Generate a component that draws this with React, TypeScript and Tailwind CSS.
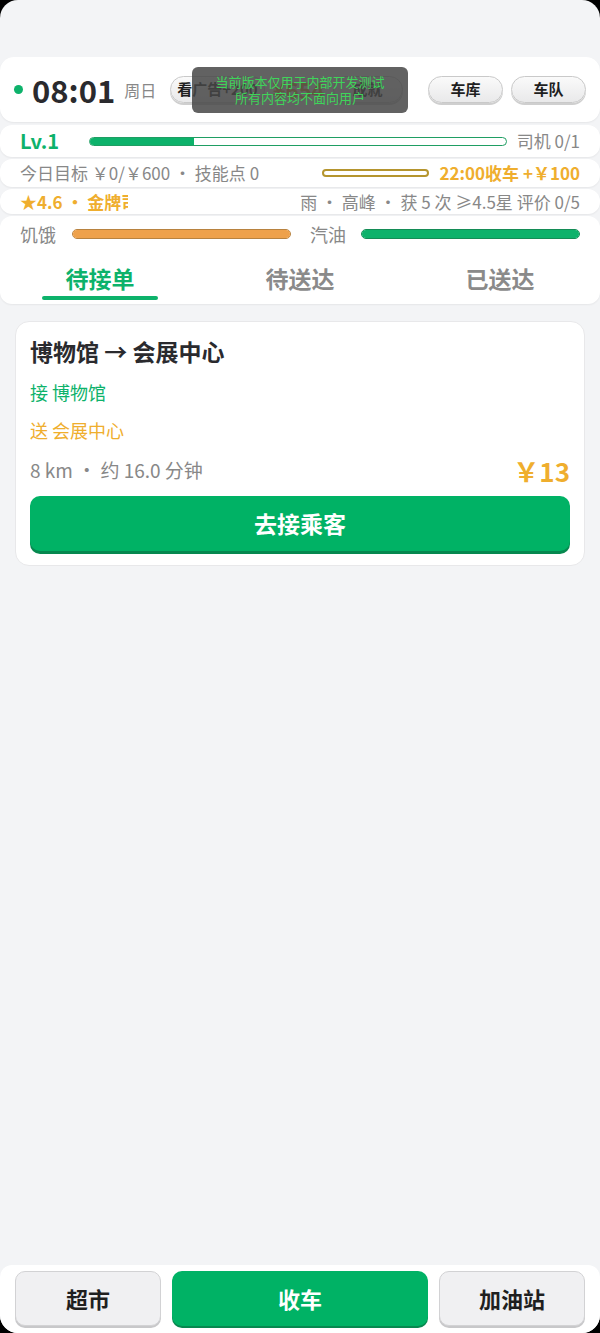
const green = "text-[#0db26b]";

function Pill({ label }: { label: string }) {
  return (
    <button className="h-[27px] rounded-full border border-[#c9c9c9] bg-gradient-to-b from-[#fafafa] to-[#e9e9ea] px-[6px] text-[15px] font-bold text-[#1f1f1f] shadow-[0_2px_0_#cfcfcf]">
      {label}
    </button>
  );
}

function Bar({ pct, fill, border, track }: { pct: number; fill: string; border: string; track: string }) {
  return (
    <div className={`h-[10px] flex-1 overflow-hidden rounded-full border ${border} ${track}`}>
      <div className={`h-full ${fill}`} style={{ width: `${pct}%` }} />
    </div>
  );
}

export default function App() {
  return (
    <div className="bg-black">
      <div
        className="relative mx-auto flex h-[1333px] w-[600px] flex-col overflow-hidden rounded-[18px] bg-[#f3f4f6] text-[#333]"
        style={{ fontFamily: '"Noto Sans CJK SC", "Noto Sans", sans-serif' }}
      >
        <div className="h-[57px]" />

        {/* header */}
        <div className="flex h-[65px] items-center rounded-[14px] bg-white pl-[14px] pr-[14px] shadow-[0_1px_2px_rgba(0,0,0,0.06)]">
          <span className="h-[9px] w-[9px] rounded-full bg-[#0db26b]" />
          <span className="ml-[9px] text-[31px] font-bold leading-none text-[#2a2a2e]">08:01</span>
          <span className="ml-[9px] text-[16px] text-[#888]">周日</span>
          <div className="ml-[14px] flex items-center gap-[8px]">
            <Pill label="看广告+200" />
            <span className="text-[22px] font-bold text-[#e8a028]">¥654</span>
            <button className="h-[27px] w-[70px] rounded-full border border-[#c9c9c9] bg-gradient-to-b from-[#fafafa] to-[#e9e9ea] text-[15px] font-bold text-[#1f1f1f] shadow-[0_2px_0_#cfcfcf]">成就</button>
          </div>
          <div className="ml-auto flex items-center gap-[8px]">
            <button className="h-[27px] w-[75px] rounded-full border border-[#c9c9c9] bg-gradient-to-b from-[#fafafa] to-[#e9e9ea] text-[15px] font-bold text-[#1f1f1f] shadow-[0_2px_0_#cfcfcf]">车库</button>
            <button className="h-[27px] w-[75px] rounded-full border border-[#c9c9c9] bg-gradient-to-b from-[#fafafa] to-[#e9e9ea] text-[15px] font-bold text-[#1f1f1f] shadow-[0_2px_0_#cfcfcf]">车队</button>
          </div>
        </div>

        {/* toast */}
        <div className="absolute left-[192px] top-[67px] flex h-[46px] w-[216px] flex-col items-center justify-center rounded-[6px] bg-[rgba(70,70,70,0.85)] text-[13px] leading-[16px] text-[#3fd45a]">
          <span>当前版本仅用于内部开发测试</span>
          <span>所有内容均不面向用户</span>
        </div>

        {/* level */}
        <div className="mt-[3px] flex h-[32px] items-center rounded-[12px] bg-white px-[20px] shadow-[0_1px_2px_rgba(0,0,0,0.06)]">
          <span className={`w-[69px] text-[20px] font-bold ${green}`}>Lv.1</span>
          <div className="h-[9px] flex-1 overflow-hidden rounded-full border border-[#1f9e63] bg-white">
            <div className="h-full w-[25%] bg-[#0db26b]" />
          </div>
          <span className="ml-[10px] text-[17px] text-[#888]">司机 0/1</span>
        </div>

        {/* target */}
        <div className="mt-[2px] flex h-[28px] items-center rounded-[12px] bg-white px-[20px] shadow-[0_1px_2px_rgba(0,0,0,0.06)]">
          <span className="text-[17px] text-[#888]">今日目标 ￥0/￥600 ・ 技能点 0</span>
          <div className="ml-auto mr-[10px] h-[8px] w-[107px] rounded-full border-2 border-[#b5952e] bg-white" />
          <span className="text-[17px] font-bold text-[#efae2e]">22:00收车 +￥100</span>
        </div>

        {/* rating */}
        <div className="mt-[2px] flex h-[25px] items-center rounded-[12px] bg-white px-[20px] shadow-[0_1px_2px_rgba(0,0,0,0.06)]">
          <span className="w-[108px] overflow-hidden whitespace-nowrap text-[17px] font-bold text-[#efae2e]">★4.6 ・ 金牌司机</span>
          <span className="ml-auto text-[17px] text-[#888]">雨 ・ 高峰 ・ 获 5 次 ≥4.5星 评价 0/5</span>
        </div>

        {/* hunger / fuel */}
        <div className="mt-[2px] flex h-[36px] items-center rounded-t-[12px] bg-white px-[20px]">
          <span className="text-[18px] text-[#888]">饥饿</span>
          <div className="ml-[16px] mr-[19px] flex flex-1">
            <Bar pct={100} fill="bg-[#eea14b]" border="border-[#b8823f]" track="bg-white" />
          </div>
          <span className="text-[18px] text-[#888]">汽油</span>
          <div className="ml-[15px] flex flex-1">
            <Bar pct={100} fill="bg-[#0db26b]" border="border-[#148c56]" track="bg-white" />
          </div>
        </div>

        {/* tabs */}
        <div className="flex h-[52px] rounded-b-[12px] bg-white shadow-[0_1px_2px_rgba(0,0,0,0.06)]">
          <div className="relative flex flex-1 items-center justify-center">
            <span className="text-[23px] font-bold text-[#0db26b]">待接单</span>
            <span className="absolute bottom-[4px] left-[42px] h-[4px] w-[116px] rounded-full bg-[#0db26b]" />
          </div>
          <div className="flex flex-1 items-center justify-center text-[23px] font-bold text-[#8a8a8a]">待送达</div>
          <div className="flex flex-1 items-center justify-center text-[23px] font-bold text-[#8a8a8a]">已送达</div>
        </div>

        {/* order card */}
        <div className="mx-[15px] mt-[17px] rounded-[14px] border border-[#e8e8ea] bg-white px-[14px] pb-[14px] pt-[13px]">
          <div className="text-[23px] font-bold leading-[32px] text-[#2a2a2e]">博物馆 → 会展中心</div>
          <div className={`mt-[12px] text-[18px] leading-[26px] ${green}`}>接 博物馆</div>
          <div className="mt-[12px] text-[18px] leading-[26px] text-[#efae2e]">送 会展中心</div>
          <div className="mt-[11px] flex h-[32px] items-center justify-between">
            <span className="text-[19px] text-[#888]">8 km ・ 约 16.0 分钟</span>
            <span className="text-[26px] font-bold text-[#efae2e]">￥13</span>
          </div>
          <button className="mt-[10px] h-[55px] w-full rounded-[10px] bg-[#00b265] text-[23px] font-bold text-white shadow-[0_3px_0_#07884f]">
            去接乘客
          </button>
        </div>

        {/* bottom bar */}
        <div className="mt-auto flex h-[68px] gap-[11px] rounded-t-[12px] bg-white px-[15px] pt-[6px]">
          <button className="h-[55px] w-[146px] rounded-[10px] border border-[#d2d2d4] bg-[#f0f0f2] text-[22px] font-bold text-[#1f1f1f] shadow-[0_2px_0_#c8c8ca]">超市</button>
          <button className="h-[55px] flex-1 rounded-[10px] bg-[#00b265] text-[22px] font-bold text-white shadow-[0_2px_0_#07884f]">收车</button>
          <button className="h-[55px] w-[146px] rounded-[10px] border border-[#d2d2d4] bg-[#f0f0f2] text-[22px] font-bold text-[#1f1f1f] shadow-[0_2px_0_#c8c8ca]">加油站</button>
        </div>
      </div>
    </div>
  );
}
